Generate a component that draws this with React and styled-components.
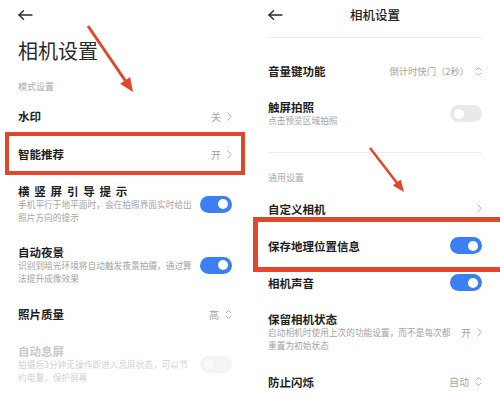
import React from 'react';
import styled, { createGlobalStyle } from 'styled-components';

const Global = createGlobalStyle`
  html, body { margin: 0; padding: 0; background: #fff; }
  body { font-family: "Noto Sans CJK SC", "Noto Sans", sans-serif; }
`;

const Screen = styled.div`
  position: relative;
  width: 500px;
  height: 398px;
  overflow: hidden;
  display: flex;
  background: #fff;
`;

const Panel = styled.div`
  width: 250px;
  flex: none;
  box-sizing: border-box;
  padding: 0 18px;
  display: flex;
  flex-direction: column;
`;

const TopBar = styled.div`
  height: 30px;
  flex: none;
  display: grid;
  grid-template-columns: 16px 1fr 16px;
  align-items: center;
`;

const BarTitle = styled.div`
  text-align: center;
  font-size: 12.5px;
  color: #222;
  font-weight: 500;
  line-height: 30px;
`;

const BigTitle = styled.div`
  height: 42px;
  line-height: 42px;
  font-size: 20px;
  color: #2a2a2a;
  font-weight: 400;
`;

const SectionLabel = styled.div`
  font-size: 9px;
  line-height: 18px;
  color: #ababab;
  margin-top: ${p => p.$mt || 0}px;
  margin-bottom: ${p => p.$mb || 0}px;
`;

const Divider = styled.div`
  height: 1px;
  flex: none;
  background: #eeeeee;
  margin-top: ${p => p.$mt || 0}px;
  margin-bottom: ${p => p.$mb || 0}px;
`;

const Row = styled.div`
  position: relative;
  flex: none;
  display: flex;
  align-items: center;
  justify-content: space-between;
  box-sizing: border-box;
  min-height: ${p => p.$h || 0}px;
  padding: ${p => p.$pt || 0}px 0 ${p => p.$pb || 0}px;
`;

const Highlight = styled.div`
  position: relative;
  &::after {
    content: "";
    position: absolute;
    top: ${p => p.$t}px;
    bottom: ${p => p.$b}px;
    left: ${p => p.$l}px;
    right: ${p => p.$r}px;
    border: ${p => p.$w}px solid #e2472c;
    pointer-events: none;
  }
`;

const TextCol = styled.div`
  display: flex;
  flex-direction: column;
`;

const Title = styled.div`
  font-size: 11.5px;
  line-height: 14px;
  font-weight: 600;
  color: ${p => (p.$disabled ? '#c9c9c9' : '#1e1e1e')};
  letter-spacing: ${p => p.$ls || 0}px;
  white-space: nowrap;
`;

const Sub = styled.div`
  font-size: 8.7px;
  line-height: 13px;
  color: ${p => (p.$disabled ? '#d2d2d2' : '#a3a3a3')};
  white-space: nowrap;
`;

const Value = styled.div`
  display: flex;
  align-items: center;
  gap: 6px;
  font-size: ${p => p.$fs || 10}px;
  color: #a3a3a3;
  white-space: nowrap;
`;

const Toggle = styled.div`
  position: relative;
  width: 32px;
  height: 17px;
  border-radius: 9px;
  flex: none;
  background: ${p => (p.$on ? '#3b7ff3' : p.$disabled ? '#f4f4f4' : '#e9e9e9')};
  &::after {
    content: "";
    position: absolute;
    top: 3.5px;
    ${p => (p.$on ? 'right: 4px;' : 'left: 4px;')}
    width: 10px;
    height: 10px;
    border-radius: 50%;
    background: ${p => (p.$disabled ? '#fafafa' : '#fff')};
  }
`;

const Overlay = styled.svg`
  position: absolute;
  left: 0;
  top: 0;
  pointer-events: none;
`;

const BackArrow = () => (
  <svg width="15" height="10" viewBox="0 0 15 10" fill="none" stroke="#2a2a2a" strokeWidth="1.4" strokeLinecap="round" strokeLinejoin="round">
    <path d="M1 5 H14" />
    <path d="M5.5 0.8 L1 5 L5.5 9.2" />
  </svg>
);

const Chevron = () => (
  <svg width="5" height="9" viewBox="0 0 5 9" fill="none" stroke="#b0b0b0" strokeWidth="1" strokeLinecap="round" strokeLinejoin="round">
    <path d="M0.8 0.8 L4.2 4.5 L0.8 8.2" />
  </svg>
);

const UpDown = () => (
  <svg width="7" height="11" viewBox="0 0 7 11" fill="none" stroke="#b0b0b0" strokeWidth="1" strokeLinecap="round" strokeLinejoin="round">
    <path d="M1 4 L3.5 1.5 L6 4" />
    <path d="M1 7 L3.5 9.5 L6 7" />
  </svg>
);

const Arrows = () => (
  <Overlay width="500" height="398" viewBox="0 0 500 398">
    <line x1="88" y1="26" x2="125.5" y2="81" stroke="#e2472c" strokeWidth="3" />
    <polygon points="133,92 120.2,83.8 130.1,77" fill="#e2472c" />
    <line x1="370" y1="148" x2="397" y2="183" stroke="#e2472c" strokeWidth="2.5" />
    <polygon points="404,192 392.8,185.6 400.7,179.4" fill="#e2472c" />
  </Overlay>
);

export default function App() {
  return (
    <Screen>
      <Global />
      <Panel>
        <TopBar>
          <BackArrow />
        </TopBar>
        <BigTitle>相机设置</BigTitle>
        <SectionLabel $mt={6} $mb={1}>模式设置</SectionLabel>
        <Row $h={38}>
          <Title>水印</Title>
          <Value>关<Chevron /></Value>
        </Row>
        <Highlight $t={-3} $b={-2} $l={-13} $r={-13} $w={4}>
          <Row $h={38}>
            <Title>智能推荐</Title>
            <Value>开<Chevron /></Value>
          </Row>
        </Highlight>
        <Row $pt={11} $pb={10}>
          <TextCol>
            <Title $ls={4.8}>横竖屏引导提示</Title>
            <Sub>手机平行于地平面时，会在拍照界面实时给出</Sub>
            <Sub>照片方向的提示</Sub>
          </TextCol>
          <Toggle $on />
        </Row>
        <Row $pt={11} $pb={10}>
          <TextCol>
            <Title>自动夜景</Title>
            <Sub>识别到暗光环境将自动触发夜景拍摄，通过算</Sub>
            <Sub>法提升成像效果</Sub>
          </TextCol>
          <Toggle $on />
        </Row>
        <Row $h={38}>
          <Title>照片质量</Title>
          <Value>高<UpDown /></Value>
        </Row>
        <Row $pt={11} $pb={10}>
          <TextCol>
            <Title $disabled>自动息屏</Title>
            <Sub $disabled>拍摄后3分钟无操作即进入息屏状态，可以节</Sub>
            <Sub $disabled>约电量，保护屏幕</Sub>
          </TextCol>
          <Toggle $disabled />
        </Row>
      </Panel>

      <Panel>
        <TopBar>
          <BackArrow />
          <BarTitle>相机设置</BarTitle>
        </TopBar>
        <Divider $mt={7} $mb={14} />
        <Row $h={38}>
          <Title>音量键功能</Title>
          <Value $fs={9.3}>倒计时快门（2秒）<UpDown /></Value>
        </Row>
        <Row $pt={10} $pb={11}>
          <TextCol>
            <Title>触屏拍照</Title>
            <Sub>点击预览区域拍照</Sub>
          </TextCol>
          <Toggle />
        </Row>
        <Divider $mt={14} $mb={16} />
        <SectionLabel $mb={3}>通用设置</SectionLabel>
        <Row $h={37}>
          <Title>自定义相机</Title>
          <Value><Chevron /></Value>
        </Row>
        <Highlight $t={-10} $b={-8} $l={-15} $r={-40} $w={5}>
          <Row $h={37}>
            <Title>保存地理位置信息</Title>
            <Toggle $on />
          </Row>
        </Highlight>
        <Row $h={37}>
          <Title>相机声音</Title>
          <Toggle $on />
        </Row>
        <Row $pt={11} $pb={11}>
          <TextCol>
            <Title>保留相机状态</Title>
            <Sub>启动相机时使用上次的功能设置，而不是每次都</Sub>
            <Sub>重置为初始状态</Sub>
          </TextCol>
          <Value>开<Chevron /></Value>
        </Row>
        <Row $h={37}>
          <Title>防止闪烁</Title>
          <Value>自动<UpDown /></Value>
        </Row>
      </Panel>
      <Arrows />
    </Screen>
  );
}
